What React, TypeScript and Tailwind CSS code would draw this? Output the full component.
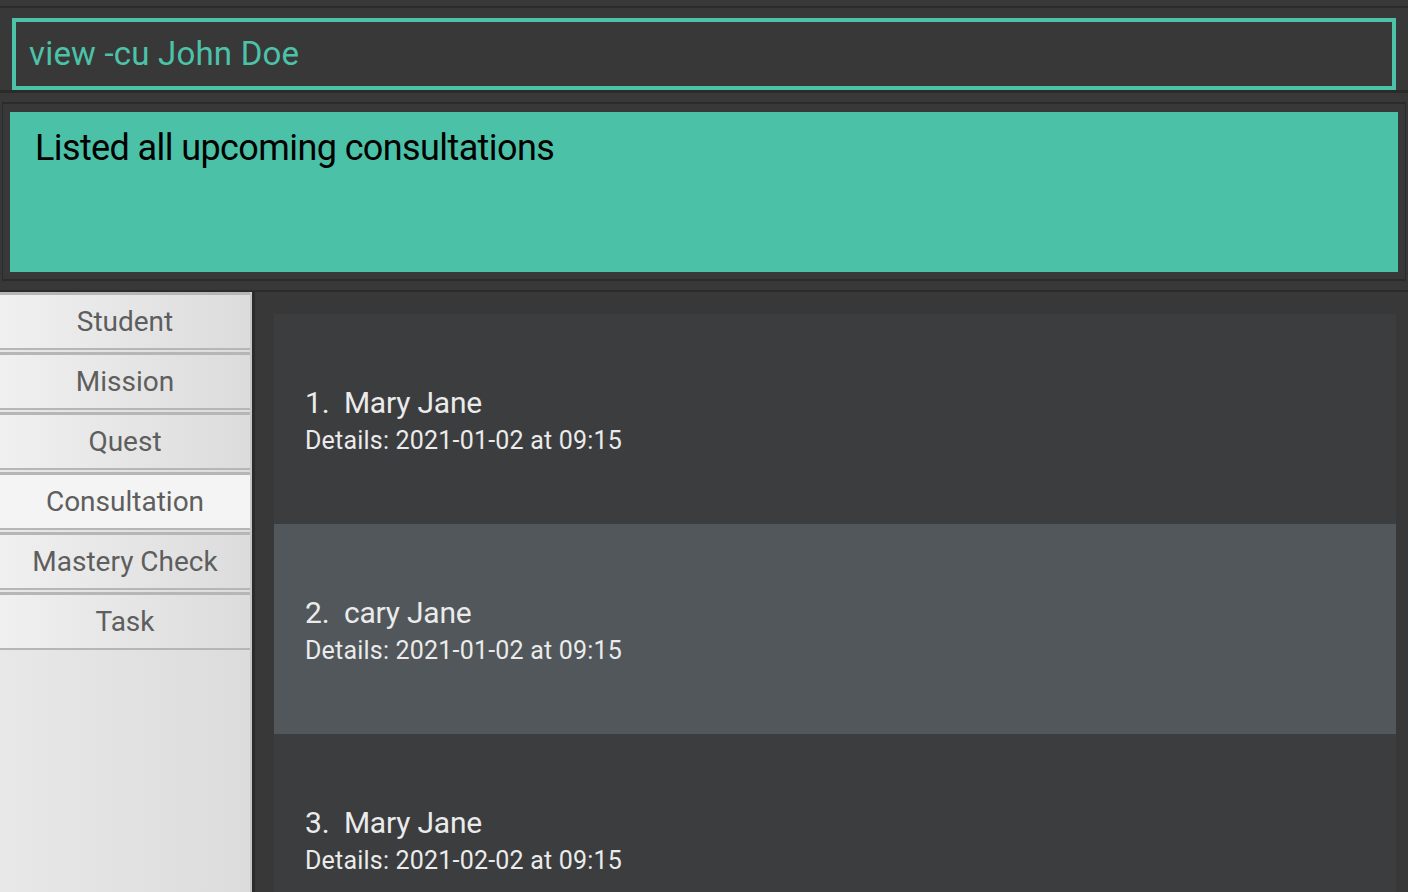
import { useState } from "react";

const tabs = ["Student", "Mission", "Quest", "Consultation", "Mastery Check", "Task"];

const consultations = [
  { id: 1, name: "Mary Jane", details: "2021-01-02 at 09:15" },
  { id: 2, name: "cary Jane", details: "2021-01-02 at 09:15" },
  { id: 3, name: "Mary Jane", details: "2021-02-02 at 09:15" },
];

const font = { fontFamily: "Roboto, 'Noto Sans', sans-serif" };

const App = () => {
  const [active, setActive] = useState("Consultation");

  return (
    <div
      className="flex h-[892px] w-[1408px] flex-col overflow-hidden bg-[#383838]"
      style={font}
    >
      {/* command box */}
      <div className="h-[6px] shrink-0" />
      <div className="shrink-0 border-t-2 border-b-[3px] border-[#2b2b2b] px-[12px] pt-[10px]">
        <div className="flex h-[72px] items-center border-4 border-[#4cc2a8] bg-[#383838] pl-[13px]">
          <span className="text-[33px] tracking-[0.2px] text-[#4cc2a8]">view -cu John Doe</span>
        </div>
      </div>

      {/* result display */}
      <div className="shrink-0 px-[2px] pt-[9px] pb-[9px]">
        <div className="border border-t-2 border-b-2 border-[#2b2b2b] px-[7px] pt-[8px] pb-[7px]">
          <div className="h-[160px] bg-[#4bc2a8] pl-[25px] pt-[14px]">
            <p className="text-[36px] leading-[44px] tracking-[-0.6px] text-black">
              Listed all upcoming consultations
            </p>
          </div>
        </div>
      </div>

      {/* main area */}
      <div className="flex min-h-0 flex-1 border-t-2 border-[#2b2b2b]">
        <nav className="flex w-[252px] shrink-0 flex-col border-r-2 border-[#c6c6c6] bg-gradient-to-r from-[#e8e8e8] to-[#dcdcdc]">
          {tabs.map((tab) => (
            <button
              key={tab}
              onClick={() => setActive(tab)}
              className={`mb-[2px] flex h-[58px] shrink-0 items-center justify-center border-t-[3px] border-b-2 border-[#b6b6b6] text-[28px] tracking-[0px] text-[#5e5e5e] ${
                active === tab
                  ? "bg-[#f4f4f4]"
                  : "bg-gradient-to-r from-[#f0f0f0] to-[#dcdcdc]"
              }`}
            >
              {tab}
            </button>
          ))}
        </nav>

        <div className="flex min-w-0 flex-1 flex-col border-l-[3px] border-[#2b2b2b] pt-[22px] pl-[19px] pr-[12px]">
          {consultations.map((c, i) => (
            <div
              key={c.id}
              className={`flex h-[210px] shrink-0 flex-col justify-center pt-[2px] pl-[31px] text-[#ebebeb] ${
                i % 2 === 1 ? "bg-[#51575a]" : "bg-[#3c3d3f]"
              }`}
            >
              <div className="whitespace-pre text-[30px] leading-[36px] tracking-[-0.2px]">
                {c.id}.  {c.name}
              </div>
              <div className="mt-[5px] text-[25px] leading-[30px] tracking-[0.2px]">
                Details: {c.details}
              </div>
            </div>
          ))}
        </div>
      </div>
    </div>
  );
};

export default App;
